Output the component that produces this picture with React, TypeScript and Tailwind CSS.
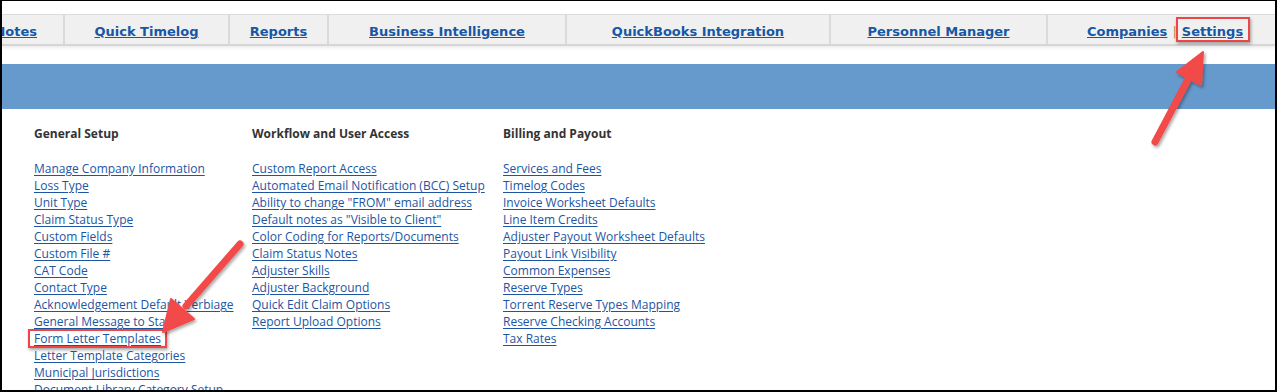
import React from "react";

const navItems = [
  { label: "Quick Timelog", w: "w-[165px]" },
  { label: "Reports", w: "w-[99px]" },
  { label: "Business Intelligence", w: "w-[238px]" },
  { label: "QuickBooks Integration", w: "w-[264px]" },
  { label: "Personnel Manager", w: "w-[217px]" },
];

const generalSetup = [
  "Manage Company Information",
  "Loss Type",
  "Unit Type",
  "Claim Status Type",
  "Custom Fields",
  "Custom File #",
  "CAT Code",
  "Contact Type",
  "Acknowledgement Default Verbiage",
  "General Message to Staff",
  "Form Letter Templates",
  "Letter Template Categories",
  "Municipal Jurisdictions",
  "Document Library Category Setup",
];

const workflow = [
  "Custom Report Access",
  "Automated Email Notification (BCC) Setup",
  'Ability to change "FROM" email address',
  'Default notes as "Visible to Client"',
  "Color Coding for Reports/Documents",
  "Claim Status Notes",
  "Adjuster Skills",
  "Adjuster Background",
  "Quick Edit Claim Options",
  "Report Upload Options",
];

const billing = [
  "Services and Fees",
  "Timelog Codes",
  "Invoice Worksheet Defaults",
  "Line Item Credits",
  "Adjuster Payout Worksheet Defaults",
  "Payout Link Visibility",
  "Common Expenses",
  "Reserve Types",
  "Torrent Reserve Types Mapping",
  "Reserve Checking Accounts",
  "Tax Rates",
];

function SettingsColumn({
  title,
  links,
  width,
  highlight,
}: {
  title: string;
  links: string[];
  width: string;
  highlight?: string;
}) {
  return (
    <div className={`${width} shrink-0`}>
      <div className="font-bold text-[#333333] leading-[17px]">{title}</div>
      <ul className="mt-[18px]">
        {links.map((l) => (
          <li key={l} className="relative leading-[17px] whitespace-nowrap">
            <a href="#" className="text-[#1d55a2] underline underline-offset-[2px]">
              {l}
            </a>
            {l === highlight && (
              <span className="absolute left-[-6px] top-[-1px] w-[139px] h-[19px] border-2 border-[#f04545] shadow-[1px_2px_3px_rgba(0,0,0,0.35)]" />
            )}
          </li>
        ))}
      </ul>
    </div>
  );
}

function Arrow({ shaft, head }: { shaft: [number, number, number, number]; head: string }) {
  return (
    <g filter="url(#arrowShadow)">
      <line
        x1={shaft[0]}
        y1={shaft[1]}
        x2={shaft[2]}
        y2={shaft[3]}
        stroke="#f24848"
        strokeWidth={7}
        strokeLinecap="round"
      />
      <polygon points={head} fill="#f24848" stroke="#f24848" strokeWidth={2} strokeLinejoin="round" />
    </g>
  );
}

export default function App() {
  return (
    <div className="relative w-[1277px] h-[392px] bg-white border-black border-t border-l-2 border-r-2 border-b-2 overflow-hidden">
      {/* top navigation */}
      <div className="mt-[13px] h-[32px] pt-[4px] flex bg-[#f0f0f0] border-t border-[#dcdcdc] border-b-2 border-b-[#d6d6d6] shadow-[0_2px_3px_rgba(0,0,0,0.08)] font-['DejaVu_Sans',sans-serif] text-[13px] font-bold text-[#1657a6]">
        <div className="w-[63px] shrink-0 flex items-center justify-end pr-[26px] overflow-hidden border-r-2 border-[#dadada] -mt-[4px] pt-[4px]">
          <a href="#" className="underline">Notes</a>
        </div>
        {navItems.map((n) => (
          <div
            key={n.label}
            className={`${n.w} shrink-0 flex items-center justify-center border-r-2 border-[#dadada] -mt-[4px] pt-[4px]`}
          >
            <a href="#" className="underline whitespace-nowrap">
              {n.label}
            </a>
          </div>
        ))}
        <div className="flex-1 flex items-center pl-[39px] whitespace-nowrap">
          <a href="#" className="underline">Companies</a>
          <span className="text-[#c08a4a] font-normal mx-[5px]">|</span>
          <span className="relative">
            <a href="#" className="underline">Settings</a>
            <span className="absolute left-[-6px] top-[-5px] w-[74px] h-[25px] border-2 border-[#f04545] shadow-[1px_2px_3px_rgba(0,0,0,0.35)]" />
          </span>
        </div>
      </div>

      {/* blue band */}
      <div className="mt-[18px] h-[45px] bg-[#6699cc]" />

      {/* settings columns */}
      <div className="flex pl-[32px] pt-[16px] font-['Open_Sans',sans-serif] text-[12px]">
        <SettingsColumn title="General Setup" links={generalSetup} width="w-[218px]" highlight="Form Letter Templates" />
        <SettingsColumn title="Workflow and User Access" links={workflow} width="w-[251px]" />
        <SettingsColumn title="Billing and Payout" links={billing} width="w-[300px]" />
      </div>

      {/* annotation arrows */}
      <svg className="absolute left-[-2px] top-[-1px] pointer-events-none" width={1277} height={392}>
        <defs>
          <filter id="arrowShadow" x="-20%" y="-20%" width="140%" height="140%">
            <feDropShadow dx="1.5" dy="2" stdDeviation="1.5" floodColor="#000" floodOpacity="0.35" />
          </filter>
        </defs>
        <Arrow shaft={[1155, 142, 1192, 72]} head="1203,52 1177,72 1201,85" />
        <Arrow shaft={[240, 244, 186, 306]} head="163,332 171,299 194,319" />
      </svg>
    </div>
  );
}
